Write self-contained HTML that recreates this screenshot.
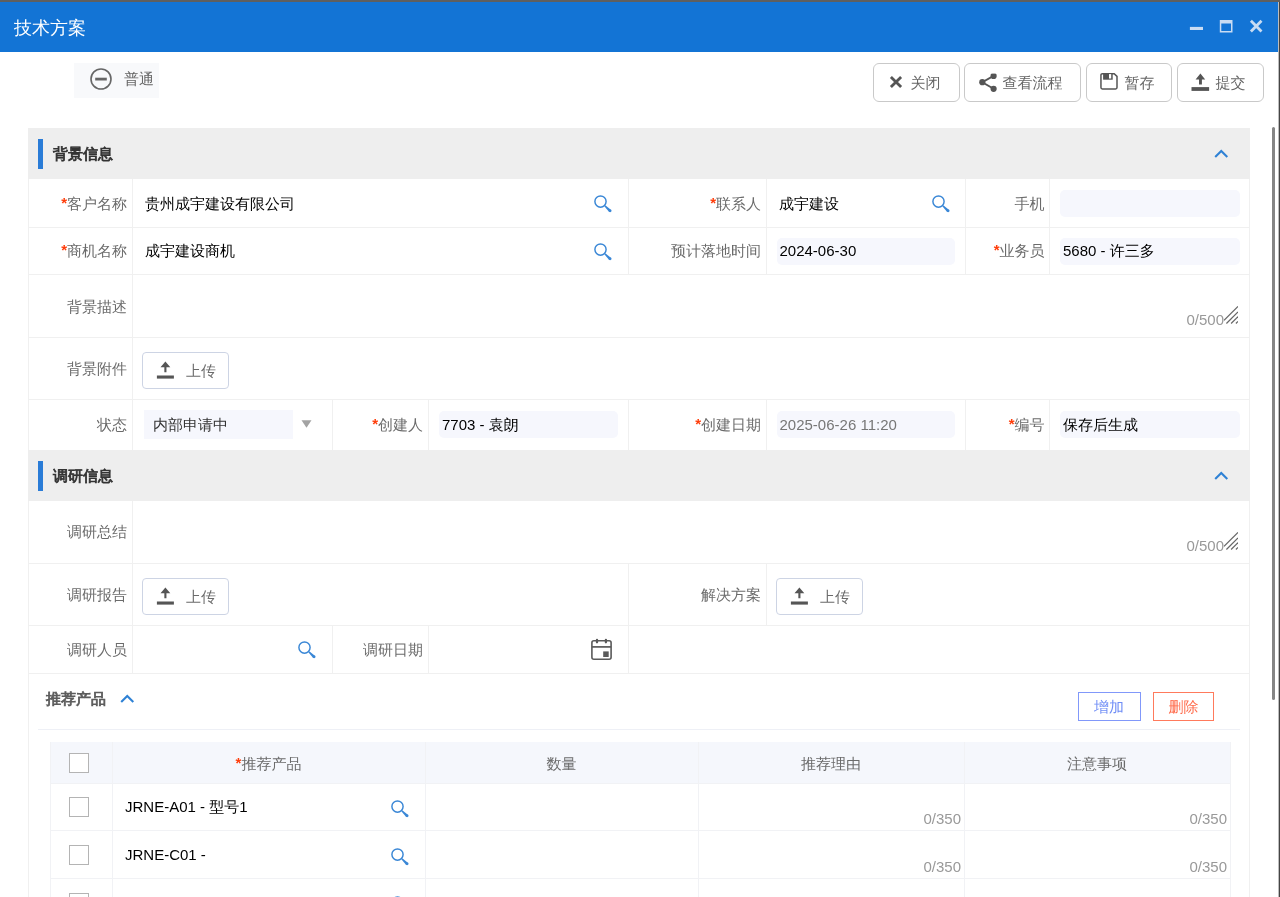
<!DOCTYPE html><html lang="zh-CN"><head><meta charset="utf-8"><title>技术方案</title><style>
*{box-sizing:border-box;margin:0;padding:0}
html,body{width:1280px;height:897px;overflow:hidden;background:#fff}
body{position:relative;font-family:"Liberation Sans","WenQuanYi Zen Hei",sans-serif;font-size:15px;color:#666}
#w{position:absolute;left:0;top:0;width:1280px;height:897px;will-change:transform;overflow:hidden}
.a{position:absolute}
.t{position:absolute;white-space:nowrap;line-height:20px;height:20px}
.lbl{text-align:right;color:#6b6b6b}
.req{color:#ff3d0a;font-weight:bold;position:relative;top:-1px}
.hl{position:absolute;height:1px;background:#f0f0f0}
.vl{position:absolute;width:1px;background:#f0f0f0}
.inp{position:absolute;background:#f6f7fd;border-radius:5px;height:27px}
.btn{position:absolute;border:1px solid #c9c9c9;border-radius:6px;background:#fff;height:39px}
.up{position:absolute;border:1px solid #cdd4e4;border-radius:4px;background:#fff;width:87px;height:37px}
.cb{position:absolute;width:20px;height:20px;border:1px solid #b4b4b4;background:#fff}
.cnt{color:#999}
.b1{color:#333;-webkit-text-stroke:0.8px #333}
.b2{color:#5c5c5c;-webkit-text-stroke:0.8px #5c5c5c}
</style></head><body><div id="w">
<div class="a" style="left:0;top:0;width:1280px;height:2px;background:#5f5f5f"></div>
<div class="a" style="left:0;top:2px;width:1278px;height:50px;background:#1374d5"></div>
<div class="a" style="left:1278px;top:2px;width:2px;height:895px;background:linear-gradient(to right,rgba(66,66,66,0.35) 50%,#454545 50%)"></div>
<div class="t" style="left:14px;top:16px;font-size:18px;line-height:24px;height:24px;color:#fff">技术方案</div>
<svg class="a" style="left:1186px;top:14px" width="84" height="26" viewBox="0 0 84 26"><rect x="3.9" y="12.9" width="13.1" height="3.1" fill="#c9dcf3"/><path d="M33.8 6h12.7v12.4h-12.7z M35.3 9.5v7.4h9.7v-7.4z" fill="#c9dcf3" fill-rule="evenodd"/><path d="M64.9 6.8L75.5 17.4M75.5 6.8L64.9 17.4" stroke="#c9dcf3" stroke-width="2.8" fill="none"/></svg>
<div class="a" style="left:74px;top:63px;width:85px;height:35px;background:#f8f9fb"></div>
<svg class="a" style="left:89px;top:67px" width="24" height="24" viewBox="0 0 24 24"><circle cx="12" cy="12" r="10" fill="none" stroke="#666" stroke-width="1.6"/><rect x="6.2" y="10.7" width="11.6" height="2.8" fill="#666"/></svg>
<div class="t" style="left:124px;top:69px;color:#666">普通</div>
<div class="btn" style="left:873px;top:63px;width:87px"></div>
<svg class="a" style="left:888px;top:74px" width="16" height="16" viewBox="0 0 16 16"><path d="M2.9 2.9L13.1 13.1M13.1 2.9L2.9 13.1" stroke="#555" stroke-width="2.8" fill="none"/></svg>
<div class="t" style="left:910.5px;top:73px;color:#666">关闭</div>
<div class="btn" style="left:964px;top:63px;width:117px"></div>
<svg class="a" style="left:976.5px;top:72px" width="22" height="21" viewBox="0 0 22 21"><g fill="#555"><circle cx="5.3" cy="10.2" r="3.1"/><circle cx="16.6" cy="3.9" r="3.1"/><circle cx="16.6" cy="16.8" r="3.1"/></g><path d="M16.6 3.9L5.3 10.2L16.6 16.8" stroke="#555" stroke-width="1.9" fill="none"/><rect x="12" y="0" width="10" height="1.6" fill="#fff"/></svg>
<div class="t" style="left:1002.5px;top:73px;color:#666">查看流程</div>
<div class="btn" style="left:1086px;top:63px;width:86px"></div>
<svg class="a" style="left:1099px;top:71.4px" width="20" height="20" viewBox="0 0 20 20"><path d="M3.4 2.65H15.2L18 5.4V16.6a1.4 1.4 0 0 1-1.4 1.4H3.35a1.4 1.4 0 0 1-1.4-1.4V4.05a1.4 1.4 0 0 1 1.4-1.4z" fill="none" stroke="#555" stroke-width="1.5"/><rect x="4.1" y="2" width="9.6" height="6.7" fill="#555"/><rect x="10" y="3.1" width="2.2" height="4.4" fill="#fff"/></svg>
<div class="t" style="left:1124.5px;top:73px;color:#666">暂存</div>
<div class="btn" style="left:1177px;top:63px;width:87px"></div>
<svg class="a" style="left:1190px;top:72px" width="21" height="20" viewBox="0 0 21 20"><path d="M10.4 1.6L5.6 7.45H9V12.4H11.9V7.45H15.2z" fill="#555"/><rect x="1.5" y="15.1" width="17.6" height="3.8" fill="#555"/></svg>
<div class="t" style="left:1215.5px;top:73px;color:#666">提交</div>
<div class="vl" style="left:28px;top:128px;height:769px"></div>
<div class="vl" style="left:1249px;top:128px;height:769px"></div>
<div class="a" style="left:28px;top:128px;width:1222px;height:51px;background:#eeeeee"></div>
<div class="a" style="left:38px;top:139px;width:5px;height:30px;background:#2a7cd7"></div>
<div class="t b1" style="left:53px;top:144px">背景信息</div>
<svg class="a" style="left:1213px;top:148px" width="16" height="11" viewBox="0 0 16 11"><path d="M2.2 9.05L8.25 3L14.3 9.05" fill="none" stroke="#2f82d5" stroke-width="2.1"/></svg>
<div class="hl" style="left:28px;top:227px;width:1222px"></div>
<div class="hl" style="left:28px;top:274px;width:1222px"></div>
<div class="hl" style="left:28px;top:337px;width:1222px"></div>
<div class="hl" style="left:28px;top:399px;width:1222px"></div>
<div class="hl" style="left:28px;top:673px;width:1222px"></div>
<div class="hl" style="left:28px;top:563px;width:1222px"></div>
<div class="hl" style="left:28px;top:625px;width:1222px"></div>
<div class="vl" style="left:132px;top:179px;height:271px"></div>
<div class="vl" style="left:132px;top:501px;height:172px"></div>
<div class="vl" style="left:628px;top:179px;height:95px"></div>
<div class="vl" style="left:766px;top:179px;height:95px"></div>
<div class="vl" style="left:965px;top:179px;height:95px"></div>
<div class="vl" style="left:1049px;top:179px;height:95px"></div>
<div class="vl" style="left:332px;top:399px;height:51px"></div>
<div class="vl" style="left:428px;top:399px;height:51px"></div>
<div class="vl" style="left:628px;top:399px;height:51px"></div>
<div class="vl" style="left:766px;top:399px;height:51px"></div>
<div class="vl" style="left:965px;top:399px;height:51px"></div>
<div class="vl" style="left:1049px;top:399px;height:51px"></div>
<div class="vl" style="left:628px;top:563px;height:110px"></div>
<div class="vl" style="left:766px;top:563px;height:62px"></div>
<div class="vl" style="left:332px;top:625px;height:48px"></div>
<div class="vl" style="left:428px;top:625px;height:48px"></div>
<div class="t lbl" style="right:1153px;top:194px"><span class="req">*</span>客户名称</div>
<div class="t" style="left:145px;top:194px;color:#000">贵州成宇建设有限公司</div>
<svg class="a" style="left:593px;top:194px" width="21" height="21" viewBox="0 0 21 21"><circle cx="7.5" cy="7.55" r="5.6" fill="none" stroke="#3a87d6" stroke-width="1.45"/><path d="M12.3 11.3L18.2 15.9L16.2 17.9L11.3 12.3z" fill="#3a87d6"/><circle cx="17.1" cy="16.8" r="1.42" fill="#3a87d6"/></svg>
<div class="t lbl" style="right:519px;top:194px"><span class="req">*</span>联系人</div>
<div class="t" style="left:779px;top:194px;color:#000">成宇建设</div>
<svg class="a" style="left:930.5px;top:194px" width="21" height="21" viewBox="0 0 21 21"><circle cx="7.5" cy="7.55" r="5.6" fill="none" stroke="#3a87d6" stroke-width="1.45"/><path d="M12.3 11.3L18.2 15.9L16.2 17.9L11.3 12.3z" fill="#3a87d6"/><circle cx="17.1" cy="16.8" r="1.42" fill="#3a87d6"/></svg>
<div class="t lbl" style="right:235.5px;top:194px">手机</div>
<div class="inp" style="left:1060px;top:190px;width:180px"></div>
<div class="t lbl" style="right:1153px;top:241px"><span class="req">*</span>商机名称</div>
<div class="t" style="left:145px;top:241px;color:#000">成宇建设商机</div>
<svg class="a" style="left:593px;top:242px" width="21" height="21" viewBox="0 0 21 21"><circle cx="7.5" cy="7.55" r="5.6" fill="none" stroke="#3a87d6" stroke-width="1.45"/><path d="M12.3 11.3L18.2 15.9L16.2 17.9L11.3 12.3z" fill="#3a87d6"/><circle cx="17.1" cy="16.8" r="1.42" fill="#3a87d6"/></svg>
<div class="t lbl" style="right:519px;top:241px">预计落地时间</div>
<div class="inp" style="left:777px;top:238px;width:178px"></div>
<div class="t" style="left:779.5px;top:241px;color:#000">2024-06-30</div>
<div class="t lbl" style="right:235.5px;top:241px"><span class="req">*</span>业务员</div>
<div class="inp" style="left:1060px;top:238px;width:180px"></div>
<div class="t" style="left:1063px;top:241px;color:#000">5680 - 许三多</div>
<div class="t lbl" style="right:1153px;top:297px">背景描述</div>
<div class="t cnt" style="right:56px;top:310px">0/500</div>
<svg class="a" style="left:1224px;top:306px" width="14" height="18" viewBox="0 0 14 18"><g stroke="#666" stroke-width="1.2" fill="none"><path d="M14 0.4L0 14.4"/><path d="M14 5.9L2.4 17.5"/><path d="M14 10.6L7.1 17.5"/><path d="M14 15.4L11.9 17.5"/></g></svg>
<div class="t lbl" style="right:1153px;top:359px">背景附件</div>
<div class="up" style="left:142px;top:352px"></div><svg class="a" style="left:156px;top:361px" width="20" height="19" viewBox="0 0 20 19"><path d="M9.4 0.4L4.5 6.3H8.35V11.3H10.45V6.3H14.3z" fill="#555"/><rect x="0.9" y="14.5" width="17" height="3.1" fill="#555"/></svg><div class="t" style="left:186px;top:361px;color:#6b6b6b">上传</div>
<div class="t lbl" style="right:1153px;top:415px">状态</div>
<div class="a" style="left:144px;top:410px;width:149px;height:29px;background:#f6f7fd"></div>
<div class="t" style="left:153px;top:415px;color:#333">内部申请中</div>
<svg class="a" style="left:301px;top:420px" width="11" height="8" viewBox="0 0 11 8"><path d="M0.5 0.3H10.5L5.5 7.8z" fill="#a3a3a3"/></svg>
<div class="t lbl" style="right:857px;top:415px"><span class="req">*</span>创建人</div>
<div class="inp" style="left:439px;top:411px;width:179px"></div>
<div class="t" style="left:442px;top:415px;color:#000">7703 - 袁朗</div>
<div class="t lbl" style="right:519px;top:415px"><span class="req">*</span>创建日期</div>
<div class="inp" style="left:777px;top:411px;width:178px"></div>
<div class="t" style="left:779.5px;top:415px;color:#777">2025-06-26 11:20</div>
<div class="t lbl" style="right:235.5px;top:415px"><span class="req">*</span>编号</div>
<div class="inp" style="left:1060px;top:411px;width:180px"></div>
<div class="t" style="left:1063px;top:415px;color:#000">保存后生成</div>
<div class="a" style="left:28px;top:450px;width:1222px;height:51px;background:#eeeeee"></div>
<div class="a" style="left:38px;top:461px;width:5px;height:30px;background:#2a7cd7"></div>
<div class="t b1" style="left:53px;top:466px">调研信息</div>
<svg class="a" style="left:1213px;top:470px" width="16" height="11" viewBox="0 0 16 11"><path d="M2.2 9.05L8.25 3L14.3 9.05" fill="none" stroke="#2f82d5" stroke-width="2.1"/></svg>
<div class="t lbl" style="right:1153px;top:522px">调研总结</div>
<div class="t cnt" style="right:56px;top:536px">0/500</div>
<svg class="a" style="left:1224px;top:532px" width="14" height="18" viewBox="0 0 14 18"><g stroke="#666" stroke-width="1.2" fill="none"><path d="M14 0.4L0 14.4"/><path d="M14 5.9L2.4 17.5"/><path d="M14 10.6L7.1 17.5"/><path d="M14 15.4L11.9 17.5"/></g></svg>
<div class="t lbl" style="right:1153px;top:585px">调研报告</div>
<div class="up" style="left:142px;top:578px"></div><svg class="a" style="left:156px;top:587px" width="20" height="19" viewBox="0 0 20 19"><path d="M9.4 0.4L4.5 6.3H8.35V11.3H10.45V6.3H14.3z" fill="#555"/><rect x="0.9" y="14.5" width="17" height="3.1" fill="#555"/></svg><div class="t" style="left:186px;top:587px;color:#6b6b6b">上传</div>
<div class="t lbl" style="right:519px;top:585px">解决方案</div>
<div class="up" style="left:776px;top:578px"></div><svg class="a" style="left:790px;top:587px" width="20" height="19" viewBox="0 0 20 19"><path d="M9.4 0.4L4.5 6.3H8.35V11.3H10.45V6.3H14.3z" fill="#555"/><rect x="0.9" y="14.5" width="17" height="3.1" fill="#555"/></svg><div class="t" style="left:820px;top:587px;color:#6b6b6b">上传</div>
<div class="t lbl" style="right:1153px;top:640px">调研人员</div>
<svg class="a" style="left:296.5px;top:640px" width="21" height="21" viewBox="0 0 21 21"><circle cx="7.5" cy="7.55" r="5.6" fill="none" stroke="#3a87d6" stroke-width="1.45"/><path d="M12.3 11.3L18.2 15.9L16.2 17.9L11.3 12.3z" fill="#3a87d6"/><circle cx="17.1" cy="16.8" r="1.42" fill="#3a87d6"/></svg>
<div class="t lbl" style="right:857px;top:640px">调研日期</div>
<svg class="a" style="left:590px;top:637px" width="24" height="25" viewBox="0 0 24 25"><rect x="1.9" y="3.75" width="19.2" height="18.5" rx="2" fill="none" stroke="#5a5a5a" stroke-width="1.6"/><path d="M1.9 9.9H21.1" stroke="#5a5a5a" stroke-width="1.7"/><path d="M7 2.9v2.4M15.9 2.9v2.4" stroke="#5a5a5a" stroke-width="2.3" stroke-linecap="round"/><rect x="13.2" y="14.4" width="5.5" height="5.6" fill="#5a5a5a"/></svg>
<div class="t b2" style="left:46px;top:689px">推荐产品</div>
<svg class="a" style="left:118.65px;top:692.75px" width="16" height="11" viewBox="0 0 16 11"><path d="M2.2 9.05L8.25 3L14.3 9.05" fill="none" stroke="#2f82d5" stroke-width="2.1"/></svg>
<div class="a" style="left:1078px;top:692px;width:63px;height:29px;border:1px solid #8198fa;background:#fff"></div><div class="t" style="left:1094px;top:697px;color:#6f8df6">增加</div>
<div class="a" style="left:1153px;top:692px;width:61px;height:29px;border:1px solid #ff7a5c;background:#fff"></div><div class="t" style="left:1168.5px;top:697px;color:#ff6a4a">删除</div>
<div class="hl" style="left:38px;top:729px;width:1202px;background:#eef0f6"></div>
<div class="a" style="left:50px;top:742px;width:1180px;height:41px;background:#f5f7fc"></div>
<div class="vl" style="left:50px;top:742px;height:155px;background:#f1f2f5"></div>
<div class="vl" style="left:112px;top:742px;height:155px;background:#f1f2f5"></div>
<div class="vl" style="left:425px;top:742px;height:155px;background:#f1f2f5"></div>
<div class="vl" style="left:698px;top:742px;height:155px;background:#f1f2f5"></div>
<div class="vl" style="left:964px;top:742px;height:155px;background:#f1f2f5"></div>
<div class="vl" style="left:1230px;top:742px;height:155px;background:#f1f2f5"></div>
<div class="hl" style="left:50px;top:783px;width:1181px;background:#f1f2f5"></div>
<div class="hl" style="left:50px;top:830px;width:1181px;background:#f1f2f5"></div>
<div class="hl" style="left:50px;top:878px;width:1181px;background:#f1f2f5"></div>
<div class="t" style="left:112px;width:313px;text-align:center;top:754px;color:#6b6b6b"><span class="req">*</span>推荐产品</div>
<div class="t" style="left:425px;width:273px;text-align:center;top:754px;color:#6b6b6b">数量</div>
<div class="t" style="left:698px;width:266px;text-align:center;top:754px;color:#6b6b6b">推荐理由</div>
<div class="t" style="left:964px;width:266px;text-align:center;top:754px;color:#6b6b6b">注意事项</div>
<div class="cb" style="left:69px;top:753px"></div>
<div class="cb" style="left:69px;top:797px"></div>
<div class="cb" style="left:69px;top:845px"></div>
<div class="cb" style="left:69px;top:893px"></div>
<div class="t" style="left:125px;top:797px;color:#000">JRNE-A01 - 型号1</div>
<svg class="a" style="left:390px;top:798.5px" width="21" height="21" viewBox="0 0 21 21"><circle cx="7.5" cy="7.55" r="5.6" fill="none" stroke="#3a87d6" stroke-width="1.45"/><path d="M12.3 11.3L18.2 15.9L16.2 17.9L11.3 12.3z" fill="#3a87d6"/><circle cx="17.1" cy="16.8" r="1.42" fill="#3a87d6"/></svg>
<div class="t" style="left:125px;top:845px;color:#000">JRNE-C01 - </div>
<svg class="a" style="left:390px;top:846.5px" width="21" height="21" viewBox="0 0 21 21"><circle cx="7.5" cy="7.55" r="5.6" fill="none" stroke="#3a87d6" stroke-width="1.45"/><path d="M12.3 11.3L18.2 15.9L16.2 17.9L11.3 12.3z" fill="#3a87d6"/><circle cx="17.1" cy="16.8" r="1.42" fill="#3a87d6"/></svg>
<svg class="a" style="left:390px;top:894.5px" width="21" height="21" viewBox="0 0 21 21"><circle cx="7.5" cy="7.55" r="5.6" fill="none" stroke="#3a87d6" stroke-width="1.45"/><path d="M12.3 11.3L18.2 15.9L16.2 17.9L11.3 12.3z" fill="#3a87d6"/><circle cx="17.1" cy="16.8" r="1.42" fill="#3a87d6"/></svg>
<div class="t cnt" style="right:319px;top:809px">0/350</div>
<div class="t cnt" style="right:53px;top:809px">0/350</div>
<div class="t cnt" style="right:319px;top:857px">0/350</div>
<div class="t cnt" style="right:53px;top:857px">0/350</div>
<div class="a" style="left:1272px;top:127px;width:3px;height:573px;background:#858585;border-radius:2px"></div>
</div></body></html>
